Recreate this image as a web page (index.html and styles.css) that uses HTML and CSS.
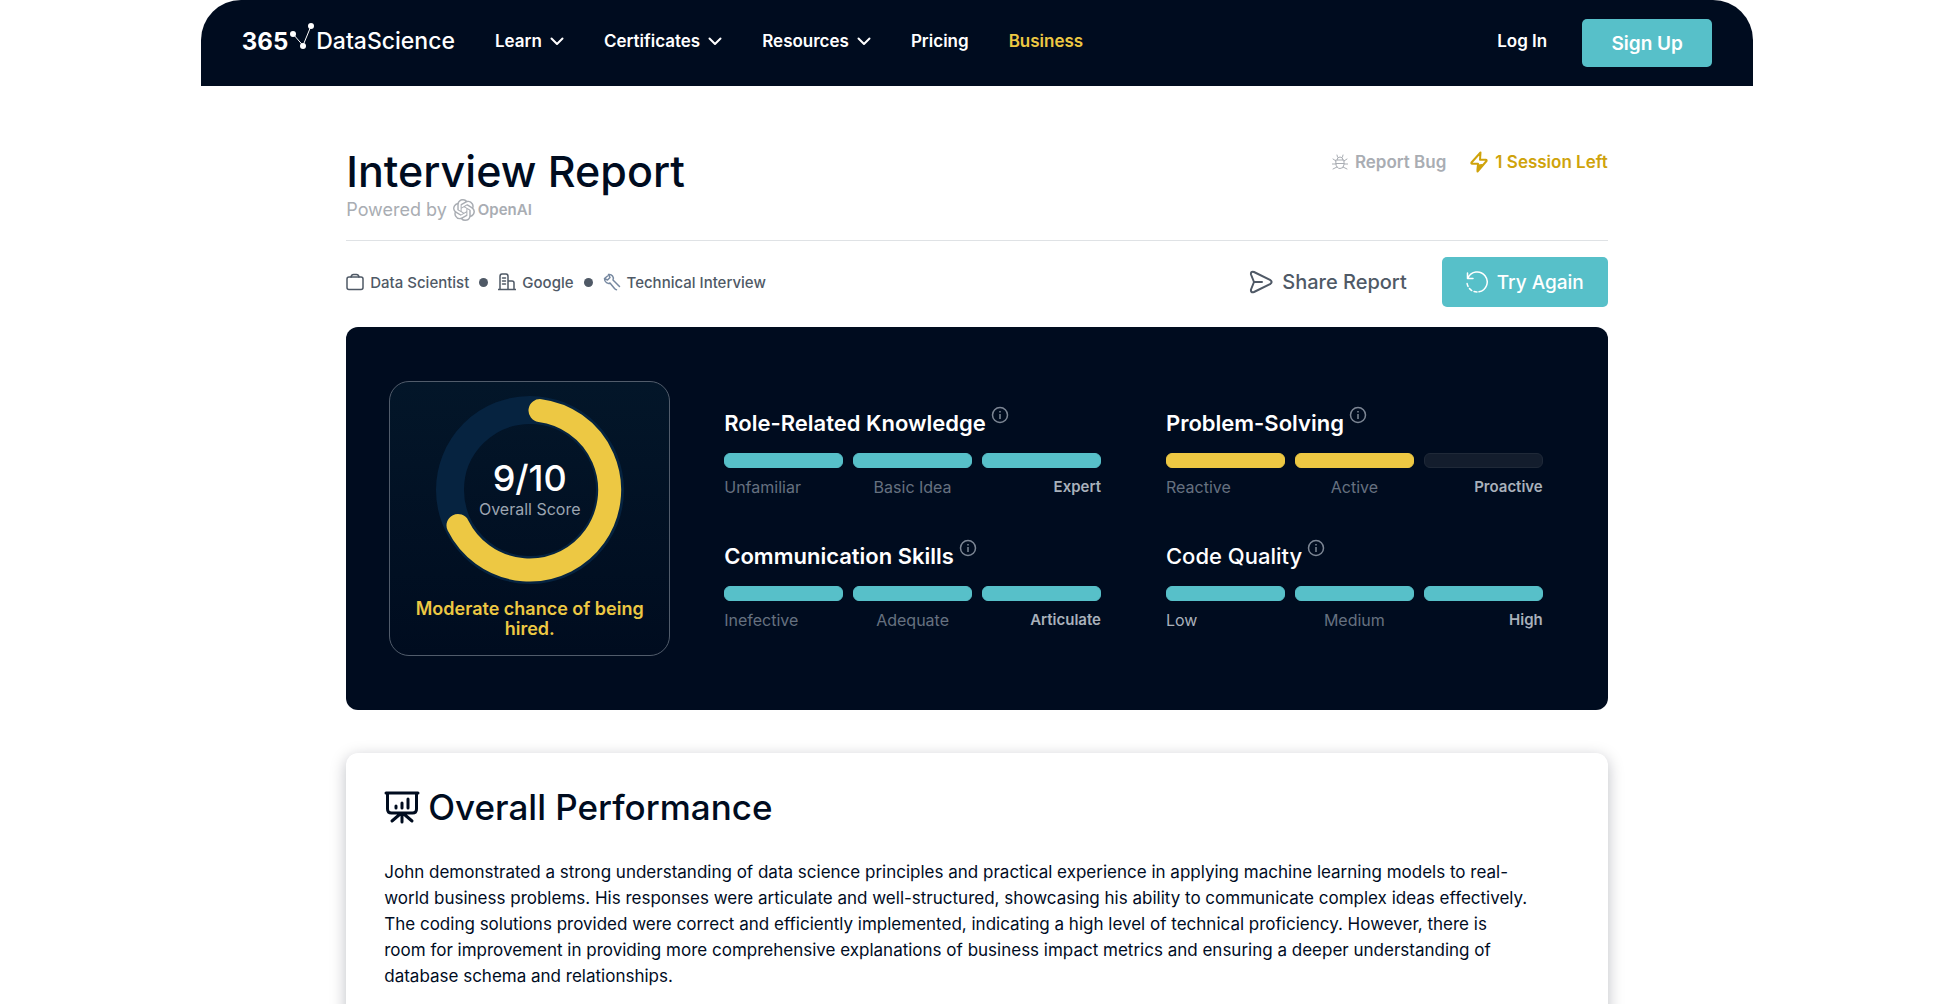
FILE: index.html
```html
<!DOCTYPE html>
<html lang="en">
<head>
<meta charset="utf-8">
<meta name="viewport" content="width=device-width, initial-scale=1">
<title>Interview Report</title>
<link rel="stylesheet" href="styles.css">
</head>
<body>
<header class="site-header">
  <a class="logo" href="#" aria-label="365 DataScience">
    <span class="logo-number">365</span>
    <svg class="logo-mark" width="26" height="28" viewBox="0 0 26 28" aria-hidden="true"><path d="M5 12 15 23.500 23 4" fill="none" stroke="#fff" stroke-width="1"/><circle cx="5" cy="12" r="3" fill="#fff"/><circle cx="15" cy="24" r="3" fill="#fff"/><circle cx="23" cy="4" r="3" fill="#fff"/></svg>
    <span class="logo-name">DataScience</span>
  </a>
  <nav class="main-nav">
    <a href="#">Learn <svg class="chevron" width="14" height="9" viewBox="0 0 14 9"><path d="M1.500 1.500 7 7l5.500-5.500"/></svg></a>
    <a href="#">Certificates <svg class="chevron" width="14" height="9" viewBox="0 0 14 9"><path d="M1.500 1.500 7 7l5.500-5.500"/></svg></a>
    <a href="#">Resources <svg class="chevron" width="14" height="9" viewBox="0 0 14 9"><path d="M1.500 1.500 7 7l5.500-5.500"/></svg></a>
    <a href="#">Pricing</a>
    <a class="accent" href="#">Business</a>
  </nav>
  <a class="login" href="#">Log In</a>
  <button class="button signup" type="button">Sign Up</button>
</header>

<main class="content">
  <section class="title-row">
    <div class="title-block">
      <h1>Interview Report</h1>
      <p class="powered">Powered by
        <svg width="22" height="22" viewBox="0 0 24 24" fill="currentColor" aria-hidden="true"><path d="M22.2819 9.8211a5.9847 5.9847 0 0 0-.5157-4.9108 6.0462 6.0462 0 0 0-6.5098-2.9A6.0651 6.0651 0 0 0 4.9807 4.1818a5.9847 5.9847 0 0 0-3.9977 2.9 6.0462 6.0462 0 0 0 .7427 7.0966 5.98 5.98 0 0 0 .511 4.9107 6.051 6.051 0 0 0 6.5146 2.9001A5.9847 5.9847 0 0 0 13.2599 24a6.0557 6.0557 0 0 0 5.7718-4.2058 5.9894 5.9894 0 0 0 3.9977-2.9001 6.0557 6.0557 0 0 0-.7475-7.0729zm-9.022 12.6081a4.4755 4.4755 0 0 1-2.8764-1.0408l.1419-.0804 4.7783-2.7582a.7948.7948 0 0 0 .3927-.6813v-6.7369l2.02 1.1686a.071.071 0 0 1 .038.052v5.5826a4.504 4.504 0 0 1-4.4945 4.4944zm-9.6607-4.1254a4.4708 4.4708 0 0 1-.5346-3.0137l.142.0852 4.783 2.7582a.7712.7712 0 0 0 .7806 0l5.8428-3.3685v2.3324a.0804.0804 0 0 1-.0332.0615L9.74 19.9502a4.4992 4.4992 0 0 1-6.1408-1.6464zM2.3408 7.8956a4.485 4.485 0 0 1 2.3655-1.9728V11.6a.7664.7664 0 0 0 .3879.6765l5.8144 3.3543-2.0201 1.1685a.0757.0757 0 0 1-.071 0l-4.8303-2.7865A4.504 4.504 0 0 1 2.3408 7.872zm16.5963 3.8558L13.1038 8.364 15.1192 7.2a.0757.0757 0 0 1 .071 0l4.8303 2.7913a4.4944 4.4944 0 0 1-.6765 8.1042v-5.6772a.79.79 0 0 0-.407-.667zm2.0107-3.0231l-.142-.0852-4.7735-2.7818a.7759.7759 0 0 0-.7854 0L9.409 9.2297V6.8974a.0662.0662 0 0 1 .0284-.0615l4.8303-2.7866a4.4992 4.4992 0 0 1 6.6802 4.66zM8.3065 12.863l-2.02-1.1638a.0804.0804 0 0 1-.038-.0567V6.0742a4.4992 4.4992 0 0 1 7.3757-3.4537l-.142.0805L8.704 5.459a.7948.7948 0 0 0-.3927.6813zm1.0976-2.3654l2.602-1.4998 2.6069 1.4998v2.9994l-2.5974 1.4997-2.6067-1.4997Z"/></svg>
        <strong>OpenAI</strong>
      </p>
    </div>
    <div class="status">
      <a class="report-bug" href="#">
        <svg class="line-icon" width="16" height="16" viewBox="0 0 16 16"><path d="M4 6h8v4.500a4 4 0 0 1-8 0zM5 6a3 3 0 0 1 6 0M4 9.500h8M4 7 1 5M12 7l3-2M4 10H0M12 10h4M5 13l-4 2M11 13l4 2M5.500 3 5 1M10.500 3l.5-2"/></svg>
        Report Bug</a>
      <span class="sessions">
        <svg class="line-icon bolt" width="18" height="22" viewBox="0 0 18 22"><path d="M10.500 1.500 1.500 11.500q-.6 1.200.6 1.200H8L7.500 20.500l9-10.500q.5-1.200-.6-1.200H10z"/><path d="M8 14.500l4-.5-4.300 5z" fill="currentColor"/></svg>
        1 Session Left</span>
    </div>
  </section>

  <section class="meta-row">
    <ul class="meta">
      <li><svg class="line-icon" width="18" height="18" viewBox="0 0 18 18"><rect x="1" y="4" width="16" height="12.500" rx="2"/><path d="M5 4q.5-2.500 2.500-2.500h3Q12.500 1.500 13 4"/></svg>Data Scientist</li>
      <li><svg class="line-icon" width="18" height="18" viewBox="0 0 18 18"><path d="M0 16.500h18M2 16.500v-13Q2 1 4 1h4q2 0 2 2.500v13M10 8h4q2 0 2 2v6.500M4.500 5h3M4.500 8h3M4.500 11h3"/></svg>Google</li>
      <li><svg class="line-icon slate" width="18" height="18" viewBox="0 0 18 18"><path d="M1.500 5.500 4.500 7 7 4.500 5.500 1.500Q8 1 9.500 3t.5 4l6.500 6.500M1.500 5.500Q1.500 8.500 3.500 9.700T7 10l4.500 5.500q1 1.200 2 1.200M4.500 3 1.500 5.500"/></svg>Technical Interview</li>
    </ul>
    <div class="actions">
      <button class="share" type="button">
        <svg class="line-icon" width="24" height="24" viewBox="0 0 24 24"><path d="M2 4.500Q1.500 1 5 2l16 7.800q3.300 2.200 0 4.400L5 22q-3.500 1-3-2.500L5 12zM5 12h8"/></svg>
        Share Report</button>
      <button class="button retry" type="button">
        <svg class="line-icon" width="22" height="22" viewBox="0 0 22 22"><path d="M1.500 2v5.500H7M2 7a10 10 0 1 1 11 13.800"/><path d="M11 21A10 10 0 0 1 1 11" stroke-dasharray="3 2.500"/></svg>
        Try Again</button>
    </div>
  </section>

  <section class="scores">
    <div class="score-card">
      <div class="ring">
        <svg width="188" height="188" viewBox="0 0 188 188" aria-hidden="true"><circle cx="94" cy="94" r="80" fill="none" stroke="#062340" stroke-width="28"/><path d="M104 14.600A80 80 0 1 1 22 129.500" fill="none" stroke="#edc843" stroke-width="23" stroke-linecap="round"/></svg>
        <div class="ring-label"><strong>9/10</strong><span>Overall Score</span></div>
      </div>
      <p class="verdict">Moderate chance of being hired.</p>
    </div>
    <div class="metrics">
      <article class="metric">
        <h2>Role-Related Knowledge <svg class="info" width="18" height="18" viewBox="0 0 18 18"><circle cx="9" cy="9" r="7.500"/><path d="M9 8v5M9 5v1.500"/></svg></h2>
        <div class="bars"><i class="teal"></i><i class="teal"></i><i class="teal"></i></div>
        <div class="levels"><span>Unfamiliar</span><span>Basic Idea</span><b>Expert</b></div>
      </article>
      <article class="metric">
        <h2>Problem-Solving <svg class="info" width="18" height="18" viewBox="0 0 18 18"><circle cx="9" cy="9" r="7.500"/><path d="M9 8v5M9 5v1.500"/></svg></h2>
        <div class="bars"><i class="gold"></i><i class="gold"></i><i></i></div>
        <div class="levels"><span>Reactive</span><span>Active</span><b>Proactive</b></div>
      </article>
      <article class="metric">
        <h2>Communication Skills <svg class="info" width="18" height="18" viewBox="0 0 18 18"><circle cx="9" cy="9" r="7.500"/><path d="M9 8v5M9 5v1.500"/></svg></h2>
        <div class="bars"><i class="teal"></i><i class="teal"></i><i class="teal"></i></div>
        <div class="levels"><span>Inefective</span><span>Adequate</span><b>Articulate</b></div>
      </article>
      <article class="metric">
        <h2 class="medium">Code Quality <svg class="info" width="18" height="18" viewBox="0 0 18 18"><circle cx="9" cy="9" r="7.500"/><path d="M9 8v5M9 5v1.500"/></svg></h2>
        <div class="bars"><i class="teal"></i><i class="teal"></i><i class="teal"></i></div>
        <div class="levels"><span class="light">Low</span><span>Medium</span><b>High</b></div>
      </article>
    </div>
  </section>

  <section class="performance">
    <h2><svg width="36" height="34" viewBox="0 0 36 34" fill="none" stroke="currentColor" stroke-width="3" stroke-linecap="round" aria-hidden="true"><path d="M2 3h32M3.500 3v16q0 4 4 4h21q4 0 4-4V3M18 24v8M15 25l-7 6M21 25l7 6M12 16v2M18 13v5M24 9v9"/></svg>Overall Performance</h2>
    <p>John demonstrated a strong understanding of data science principles and practical experience in applying machine learning models to real-world business problems. His responses were articulate and well-structured, showcasing his ability to communicate complex ideas effectively. The coding solutions provided were correct and efficiently implemented, indicating a high level of technical proficiency. However, there is room for improvement in providing more comprehensive explanations of business impact metrics and ensuring a deeper understanding of database schema and relationships.</p>
  </section>
</main>
</body>
</html>
```
FILE: styles.css
```css
* {
  box-sizing: border-box;
}

body {
  margin: 0;
  padding-left: 14px;
  background: #fff;
  color: #000c1f;
  font-family: Inter, "Liberation Sans", sans-serif;
  font-size: 16px;
}

h1, h2, p, ul {
  margin: 0;
  padding: 0;
}

a {
  color: inherit;
  text-decoration: none;
}

button {
  border: 0;
  padding: 0;
  background: none;
  color: inherit;
  font: inherit;
  cursor: pointer;
}

svg {
  flex: none;
}

.line-icon {
  fill: none;
  stroke: currentColor;
  stroke-width: 2;
  stroke-linecap: round;
  stroke-linejoin: round;
}

.button {
  border-radius: 5px;
  background: #57c0c9;
  color: #fff;
}

/* Header */

.site-header {
  display: flex;
  align-items: center;
  width: 80.6%;
  height: 86px;
  margin: 0 auto;
  padding: 0 41px;
  border-radius: 40px 40px 0 0;
  background: #000c1f;
  color: #fff;
  font-size: 17px;
  font-weight: 600;
}

.logo {
  display: flex;
  align-items: center;
  height: 82px;
  align-self: flex-start;
  font-size: 23px;
}

.logo-number {
  font-size: 24px;
  font-weight: 700;
}

.logo-mark {
  align-self: flex-start;
  margin: 22px 2px 0 0;
}

.logo-name {
  font-weight: 500;
}

.main-nav {
  display: flex;
  gap: 40px;
  margin: 0 auto 4px 40px;
}

.main-nav a {
  display: flex;
  align-items: center;
  gap: 8px;
}

.chevron {
  fill: none;
  stroke: currentColor;
  stroke-width: 2;
  stroke-linecap: round;
  stroke-linejoin: round;
}

.accent {
  color: #edc843;
}

.login {
  margin: 0 35px 4px 0;
}

.signup {
  width: 130px;
  height: 48px;
  font-size: 19px;
  font-weight: 600;
}

/* Report heading */

.content {
  width: 65.5%;
  margin: 0 auto;
}

.title-row {
  display: flex;
  justify-content: space-between;
  align-items: flex-start;
  padding: 60px 0 17px;
  border-bottom: 1px solid #dfe2e5;
}

h1 {
  font-size: 43px;
  font-weight: 500;
  line-height: 50px;
}

.powered {
  display: flex;
  align-items: center;
  gap: 3px;
  height: 27px;
  color: #a9adb3;
  font-size: 18px;
}

.powered svg {
  margin-left: 3px;
}

.powered strong {
  font-size: 15px;
  font-weight: 600;
}

.status,
.report-bug,
.sessions {
  display: flex;
  align-items: center;
}

.status {
  gap: 24px;
  padding-top: 5px;
  font-size: 17px;
  font-weight: 600;
}

.report-bug,
.sessions {
  gap: 7px;
}

.report-bug {
  color: #a9adb3;
}

.report-bug svg {
  stroke-width: 1;
}

.sessions {
  color: #cfa30b;
}

.meta-row {
  display: flex;
  justify-content: space-between;
  align-items: center;
  height: 86px;
  padding-bottom: 4px;
  color: #4f5966;
}

.meta {
  display: flex;
  font-size: 15px;
  font-weight: 500;
  list-style: none;
}

.meta li {
  display: flex;
  align-items: center;
  gap: 6px;
}

.meta li svg {
  stroke-width: 1.5;
}

.meta li + li::before {
  content: "";
  width: 9px;
  height: 9px;
  margin: 0 4px 0 10px;
  border-radius: 50%;
  background: currentColor;
}

.meta .slate {
  color: #7688a0;
}

.actions {
  display: flex;
  align-items: center;
  gap: 35px;
}

.actions button {
  display: flex;
  align-items: center;
  justify-content: center;
  gap: 9px;
  height: 50px;
  font-size: 20px;
  font-weight: 500;
}

.actions .retry {
  width: 166px;
  font-size: 19px;
}

.retry svg {
  stroke-width: 1.5;
}

/* Scores */

.scores {
  display: flex;
  align-items: center;
  gap: 54px;
  padding: 54px 65px 54px 43px;
  border-radius: 12px;
  background: #000c1f;
}

.score-card {
  flex: none;
  width: 281px;
  height: 275px;
  padding: 14px 20px;
  border: 1px solid #515c6b;
  border-radius: 20px;
  background: linear-gradient(#031629, #000c1f);
  text-align: center;
}

.ring {
  display: grid;
  justify-items: center;
  align-items: center;
}

.ring > * {
  grid-area: 1 / 1;
}

.ring-label {
  display: flex;
  flex-direction: column;
  color: #9ca5b1;
}

.ring-label strong {
  color: #fff;
  font-size: 36px;
  font-weight: 500;
  line-height: 38px;
}

.ring-label span {
  line-height: 24px;
}

.verdict {
  margin-top: 15px;
  color: #edc843;
  font-size: 18px;
  font-weight: 600;
  line-height: 20px;
}

.metrics {
  flex: 1;
  display: grid;
  grid-template-columns: 1fr 1fr;
  gap: 40px 65px;
}

.metric h2 {
  display: flex;
  gap: 5px;
  color: #fff;
  font-size: 22px;
  font-weight: 600;
  line-height: 34px;
}

.metric .medium {
  font-weight: 500;
}

.info {
  fill: none;
  stroke: #7c8694;
  stroke-width: 1.5;
}

.bars {
  display: grid;
  grid-template-columns: repeat(3, 1fr);
  gap: 10px;
  margin-top: 13px;
}

.bars i {
  height: 15px;
  border: 1px solid #1f2938;
  border-radius: 6px;
  background: #131d2d;
}

.bars .teal {
  border-color: #57c0c9;
  background: #57c0c9;
}

.bars .gold {
  border-color: #edc843;
  background: #edc843;
}

.levels {
  display: grid;
  grid-template-columns: repeat(3, 1fr);
  gap: 10px;
  margin-top: 7px;
  color: #667180;
  font-size: 16px;
  line-height: 24px;
  text-align: center;
}

.levels :first-child {
  text-align: left;
}

.levels b {
  color: #a9b1bb;
  font-size: 15px;
  font-weight: 600;
  text-align: right;
}

.levels .light {
  color: #a9b1bb;
}

/* Written feedback */

.performance {
  margin-top: 43px;
  padding: 32px 38px 40px;
  border-radius: 12px;
  background: #fff;
  box-shadow: 0 4px 16px rgb(0 12 31 / 26%);
}

.performance h2 {
  display: flex;
  align-items: center;
  gap: 8px;
  font-size: 35px;
  font-weight: 500;
  line-height: 44px;
}

.performance p {
  margin-top: 30px;
  padding-right: 38px;
  font-size: 17px;
  line-height: 26px;
}
```
